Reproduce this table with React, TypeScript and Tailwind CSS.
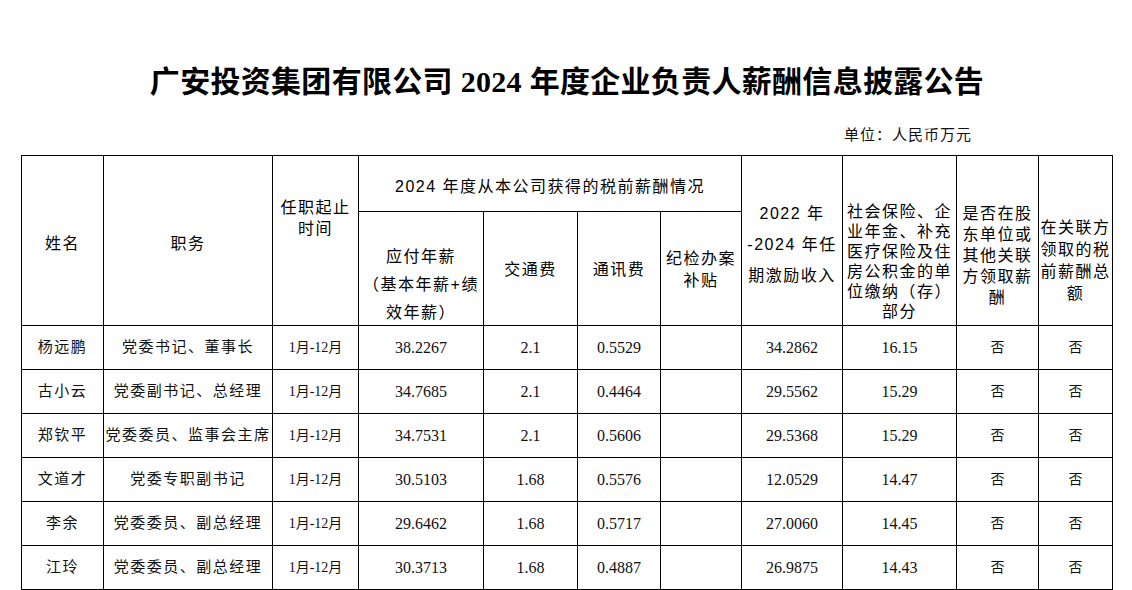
import React from 'react';

const rows = [
  ['杨远鹏', '党委书记、董事长', '38.2267', '2.1', '0.5529', '34.2862', '16.15'],
  ['古小云', '党委副书记、总经理', '34.7685', '2.1', '0.4464', '29.5562', '15.29'],
  ['郑钦平', '党委委员、监事会主席', '34.7531', '2.1', '0.5606', '29.5368', '15.29'],
  ['文道才', '党委专职副书记', '30.5103', '1.68', '0.5576', '12.0529', '14.47'],
  ['李余', '党委委员、副总经理', '29.6462', '1.68', '0.5717', '27.0060', '14.45'],
  ['江玲', '党委委员、副总经理', '30.3713', '1.68', '0.4887', '26.9875', '14.43'],
];

const widths = [82, 169, 86, 125, 94, 83, 81, 101, 114, 82, 74];

const th = "border border-black p-0 font-normal text-[16px] tracking-[1.5px] text-black whitespace-nowrap text-center";
const td = "border border-black p-0 h-[44px] text-center align-middle whitespace-nowrap text-[#111]";
const cjk = "text-[15px] tracking-[1.5px]";
const num = "text-[16px]";

export default function App() {
  return (
    <div className="w-[1132px] h-[590px] bg-white overflow-hidden font-['Liberation_Serif','Noto_Sans_CJK_SC',serif]">
      <h1 className="pt-[66px] pl-[2px] text-center text-[30px] leading-[32px] font-bold tracking-[0.3px] text-black">
        广安投资集团有限公司 2024 年度企业负责人薪酬信息披露公告
      </h1>
      <div className="mt-[27px] flex justify-end pr-[160px] text-[15px] leading-[20px] tracking-[1px] text-[#111]">
        单位：人民币万元
      </div>
      <table className="mt-[10px] ml-[21px] w-[1091px] table-fixed border-collapse">
        <colgroup>
          {widths.map((w, i) => (
            <col key={i} style={{ width: w }} />
          ))}
        </colgroup>
        <thead className="font-['Liberation_Sans','Noto_Sans_CJK_SC',sans-serif]">
          <tr className="h-[56px]">
            <th rowSpan={2} className={`${th} align-middle pt-[6px]`}>姓名</th>
            <th rowSpan={2} className={`${th} align-middle pt-[6px]`}>职务</th>
            <th rowSpan={2} className={`${th} align-top pt-[41px] leading-[21px]`}>
              任职起止<br />时间
            </th>
            <th colSpan={4} className={`${th} align-middle pt-[6px]`}>
              2024 年度从本公司获得的税前薪酬情况
            </th>
            <th rowSpan={2} className={`${th} align-top pt-[42px] leading-[31px]`}>
              2022 年<br />-2024 年任<br />期激励收入
            </th>
            <th rowSpan={2} className={`${th} align-top pt-[46px] leading-[20px]`}>
              社会保险、企<br />业年金、补充<br />医疗保险及住<br />房公积金的单<br />位缴纳（存）<br />部分
            </th>
            <th rowSpan={2} className={`${th} align-top pt-[47px] leading-[21px]`}>
              是否在股<br />东单位或<br />其他关联<br />方领取薪<br />酬
            </th>
            <th rowSpan={2} className={`${th} align-top pt-[61px] leading-[22px] tracking-[0.5px]`}>
              在关联方<br />领取的税<br />前薪酬总<br />额
            </th>
          </tr>
          <tr className="h-[114px]">
            <th className={`${th} align-top pt-[31px] leading-[28px] tracking-[0.5px]`}>
              <div className="-mb-[10px]">
                应付年薪<br />（基本年薪+绩<br />效年薪）
              </div>
            </th>
            <th className={`${th} align-middle pt-[2px]`}>交通费</th>
            <th className={`${th} align-middle pt-[2px]`}>通讯费</th>
            <th className={`${th} align-middle pt-[2px] leading-[22px]`}>
              纪检办案<br />补贴
            </th>
          </tr>
        </thead>
        <tbody>
          {rows.map((r) => (
            <tr key={r[0]}>
              <td className={`${td} ${cjk}`}>{r[0]}</td>
              <td className={`${td} ${cjk}`}>{r[1]}</td>
              <td className={`${td} text-[14px]`}>1月-12月</td>
              <td className={`${td} ${num}`}>{r[2]}</td>
              <td className={`${td} ${num}`}>{r[3]}</td>
              <td className={`${td} ${num}`}>{r[4]}</td>
              <td className={td}></td>
              <td className={`${td} ${num}`}>{r[5]}</td>
              <td className={`${td} ${num}`}>{r[6]}</td>
              <td className={`${td} text-[14px]`}>否</td>
              <td className={`${td} text-[14px]`}>否</td>
            </tr>
          ))}
        </tbody>
      </table>
    </div>
  );
}
